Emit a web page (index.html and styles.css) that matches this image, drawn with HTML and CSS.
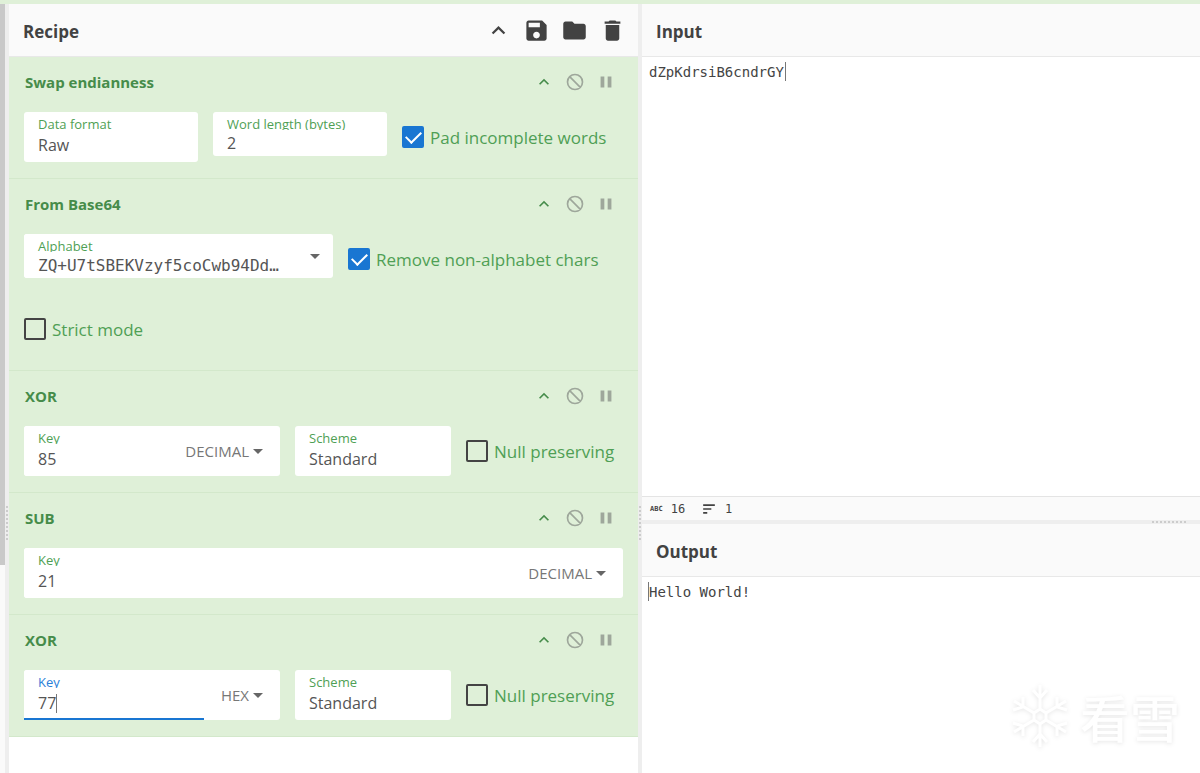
FILE: index.html
```html
<!DOCTYPE html>
<html lang="en">
<head>
    <meta charset="UTF-8">
    <meta name="viewport" content="width=device-width, initial-scale=1.0">
    <title>Recipe</title>
    <link rel="stylesheet" href="styles.css">
</head>
<body>

    <!-- Shared icons -->
    <svg class="sprite" aria-hidden="true">
        <symbol id="chevron" viewBox="0 0 24 24"><path d="M12 8l-6 6 1.41 1.41L12 10.83l4.59 4.58L18 14z"/></symbol>
        <symbol id="save" viewBox="0 0 24 24"><path d="M17 3H5c-1.11 0-2 .9-2 2v14c0 1.1.89 2 2 2h14c1.1 0 2-.9 2-2V7l-4-4zm-5 16c-1.66 0-3-1.34-3-3s1.34-3 3-3 3 1.34 3 3-1.34 3-3 3zm3-10H5V5h10v4z"/></symbol>
        <symbol id="folder" viewBox="0 0 24 24"><path d="M10 4H4c-1.1 0-1.99.9-1.99 2L2 18c0 1.1.9 2 2 2h16c1.1 0 2-.9 2-2V8c0-1.1-.9-2-2-2h-8l-2-2z"/></symbol>
        <symbol id="trash" viewBox="0 0 24 24"><path d="M6 19c0 1.1.9 2 2 2h8c1.1 0 2-.9 2-2V7H6v12zM19 4h-3.5l-1-1h-5l-1 1H5v2h14V4z"/></symbol>
        <symbol id="disable" viewBox="0 0 24 24"><path d="M12 3a9 9 0 1 0 0 18a9 9 0 0 0 0-18zM5.6 5.6l12.8 12.8" fill="none" stroke="currentColor" stroke-width="2"/></symbol>
        <symbol id="pause" viewBox="0 0 24 24"><path d="M5.500 5.500h4.500v13H5.500zM14 5.500h4.500v13H14z"/></symbol>
        <symbol id="lines" viewBox="0 0 24 24"><path d="M2 4h20v3H2zM2 10.500h14v3H2zM2 17h7v3H2z"/></symbol>
    </svg>

    <div class="banner"></div>

    <div class="workspace">
        <div class="scroll-track"><div class="scroll-thumb"></div></div>
        <div class="gutter gutter-horizontal"></div>

        <!-- Recipe -->
        <section class="recipe">
            <header class="title">
                <h2>Recipe</h2>
                <div class="controls">
                    <button aria-label="Hide arguments"><svg><use href="#chevron"/></svg></button>
                    <button aria-label="Save recipe"><svg><use href="#save"/></svg></button>
                    <button aria-label="Load recipe"><svg><use href="#folder"/></svg></button>
                    <button aria-label="Clear recipe"><svg><use href="#trash"/></svg></button>
                </div>
            </header>

            <ul class="rec-list">
                <li class="operation">
                    <div class="op-header">
                        <h3>Swap endianness</h3>
                        <div class="op-icons">
                            <button class="hide-args" aria-label="Hide arguments"><svg><use href="#chevron"/></svg></button>
                            <button aria-label="Disable operation"><svg><use href="#disable"/></svg></button>
                            <button aria-label="Set breakpoint"><svg><use href="#pause"/></svg></button>
                        </div>
                    </div>
                    <div class="args">
                        <div class="field medium">
                            <label for="data-format">Data format</label>
                            <select id="data-format"><option>Raw</option></select>
                        </div>
                        <div class="field medium short">
                            <label for="word-length">Word length (bytes)</label>
                            <input type="text" id="word-length" value="2">
                        </div>
                        <label class="check"><input type="checkbox" checked>Pad incomplete words</label>
                    </div>
                </li>

                <li class="operation">
                    <div class="op-header">
                        <h3>From Base64</h3>
                        <div class="op-icons">
                            <button class="hide-args" aria-label="Hide arguments"><svg><use href="#chevron"/></svg></button>
                            <button aria-label="Disable operation"><svg><use href="#disable"/></svg></button>
                            <button aria-label="Set breakpoint"><svg><use href="#pause"/></svg></button>
                        </div>
                    </div>
                    <div class="args">
                        <div class="group wide short">
                            <div class="field short">
                                <label for="alphabet">Alphabet</label>
                                <input type="text" id="alphabet" class="mono" value="ZQ+U7tSBEKVzyf5coCwb94Dd…">
                            </div>
                            <button class="toggle small" aria-label="Choose alphabet"><span class="arrow"></span></button>
                        </div>
                        <label class="check"><input type="checkbox" checked>Remove non-alphabet chars</label>
                        <label class="check"><input type="checkbox">Strict mode</label>
                    </div>
                </li>

                <li class="operation">
                    <div class="op-header">
                        <h3>XOR</h3>
                        <div class="op-icons">
                            <button class="hide-args" aria-label="Hide arguments"><svg><use href="#chevron"/></svg></button>
                            <button aria-label="Disable operation"><svg><use href="#disable"/></svg></button>
                            <button aria-label="Set breakpoint"><svg><use href="#pause"/></svg></button>
                        </div>
                    </div>
                    <div class="args">
                        <div class="group key">
                            <div class="field">
                                <label for="key-1">Key</label>
                                <input type="text" id="key-1" value="85">
                            </div>
                            <button class="toggle">DECIMAL<span class="arrow"></span></button>
                        </div>
                        <div class="field narrow">
                            <label for="scheme-1">Scheme</label>
                            <select id="scheme-1"><option>Standard</option></select>
                        </div>
                        <label class="check"><input type="checkbox">Null preserving</label>
                    </div>
                </li>

                <li class="operation">
                    <div class="op-header">
                        <h3>SUB</h3>
                        <div class="op-icons">
                            <button class="hide-args" aria-label="Hide arguments"><svg><use href="#chevron"/></svg></button>
                            <button aria-label="Disable operation"><svg><use href="#disable"/></svg></button>
                            <button aria-label="Set breakpoint"><svg><use href="#pause"/></svg></button>
                        </div>
                    </div>
                    <div class="args">
                        <div class="group full">
                            <div class="field">
                                <label for="key-2">Key</label>
                                <input type="text" id="key-2" value="21">
                            </div>
                            <button class="toggle">DECIMAL<span class="arrow"></span></button>
                        </div>
                    </div>
                </li>

                <li class="operation">
                    <div class="op-header">
                        <h3>XOR</h3>
                        <div class="op-icons">
                            <button class="hide-args" aria-label="Hide arguments"><svg><use href="#chevron"/></svg></button>
                            <button aria-label="Disable operation"><svg><use href="#disable"/></svg></button>
                            <button aria-label="Set breakpoint"><svg><use href="#pause"/></svg></button>
                        </div>
                    </div>
                    <div class="args">
                        <div class="group key">
                            <div class="field active">
                                <label for="key-3">Key</label>
                                <input type="text" id="key-3" value="77">
                                <span class="caret"></span>
                            </div>
                            <button class="toggle">HEX<span class="arrow"></span></button>
                        </div>
                        <div class="field narrow">
                            <label for="scheme-2">Scheme</label>
                            <select id="scheme-2"><option>Standard</option></select>
                        </div>
                        <label class="check"><input type="checkbox">Null preserving</label>
                    </div>
                </li>
            </ul>
        </section>

        <div class="gutter gutter-horizontal"></div>

        <!-- Input and output -->
        <div class="io">
            <section class="pane input-pane">
                <header class="title"><h2><label for="input-text">Input</label></h2></header>
                <div class="editor">
                    <textarea id="input-text" spellcheck="false">dZpKdrsiB6cndrGY</textarea>
                    <span class="caret caret-end"></span>
                </div>
                <footer class="status-bar">
                    <span class="abc">ABC</span>
                    <span>16</span>
                    <svg><use href="#lines"/></svg>
                    <span>1</span>
                </footer>
            </section>
            <div class="gutter gutter-vertical"></div>
            <section class="pane output-pane">
                <header class="title"><h2><label for="output-text">Output</label></h2></header>
                <div class="editor">
                    <textarea id="output-text" readonly spellcheck="false">Hello World!</textarea>
                    <span class="caret caret-start"></span>
                </div>
            </section>
        </div>
    </div>

    <div class="watermark">
        <svg viewBox="0 0 60 66">
            <path d="M30 26l6 4v7l-6 4-6-4v-7zM30 26V2M30 41v23M36 30l20-12M36 37l20 12M24 30L4 18M24 37L4 49M23 7l7 8 7-8M23 59l7-8 7 8M47 14v10l10 3M47 53V43l10-3M13 14v10L3 27M13 53V43L3 40"/>
        </svg>
        <span>看雪</span>
    </div>

</body>
</html>
```
FILE: styles.css
```css
* {
    box-sizing: border-box;
}

body {
    margin: 0;
    height: 100vh;
    display: flex;
    flex-direction: column;
    overflow: hidden;
    background-color: #fff;
    color: #424242;
    font-family: "Open Sans", "Noto Sans", sans-serif;
    font-size: 16px;
}

h2, h3, ul {
    margin: 0;
    padding: 0;
}

button {
    border: none;
    background: none;
    padding: 0;
    color: inherit;
    font-family: inherit;
    cursor: pointer;
}

svg {
    display: block;
    fill: currentColor;
}

.sprite {
    position: absolute;
    width: 0;
    height: 0;
}

.banner {
    flex: 0 0 4px;
    background-color: #dff0d8;
}

.workspace {
    flex: 1;
    display: flex;
    min-height: 0;
}

.scroll-track {
    flex: 0 0 5px;
    background-color: #fafafa;
}

.scroll-thumb {
    height: 73%;
    background-color: #c9c9c9;
}

.gutter {
    background-color: #eee;
}

.gutter-horizontal {
    flex: 0 0 4px;
}

.gutter-horizontal::before {
    content: "";
    display: block;
    width: 2px;
    height: 34px;
    margin: 65vh auto 0;
    background: repeating-linear-gradient(#ccc 0 2px, transparent 2px 4px);
}

.gutter-vertical {
    flex: 0 0 4px;
    display: flex;
    align-items: center;
    justify-content: flex-end;
    padding-right: 14px;
}

.gutter-vertical::before {
    content: "";
    width: 34px;
    height: 2px;
    background: repeating-linear-gradient(90deg, #ccc 0 2px, transparent 2px 4px);
}

.title {
    flex: 0 0 53px;
    display: flex;
    align-items: center;
    justify-content: space-between;
    padding: 4px 12px 0 14px;
    background-color: #fafafa;
    border-bottom: 1px solid #e8e8e8;
}

.title h2 {
    font-size: 17px;
    line-height: 24px;
}

.controls {
    display: flex;
    gap: 11px;
    padding-bottom: 4px;
}

.controls svg {
    width: 27px;
    height: 27px;
}

/* Recipe */
.recipe {
    flex: 629;
    display: flex;
    flex-direction: column;
    min-width: 0;
}

.rec-list {
    list-style: none;
}

.operation {
    padding: 0 15px 16px;
    background-color: #dff0d8;
    border-bottom: 1px solid #d3e8cb;
    color: #468c4a;
}

.op-header {
    height: 55px;
    display: flex;
    align-items: center;
    justify-content: space-between;
    padding: 0 7px 6px 1px;
}

.op-header h3 {
    font-size: 15px;
    line-height: 20px;
}

.op-icons {
    display: flex;
    gap: 11px;
    color: #9ea79b;
}

.op-icons svg {
    width: 20px;
    height: 20px;
}

.hide-args {
    color: #468c4a;
}

.args {
    display: flex;
    flex-wrap: wrap;
    align-items: flex-start;
    gap: 20px 15px;
}

.field {
    position: relative;
    height: 50px;
    padding-top: 4px;
    background-color: #fff;
    border-radius: 3px;
}

.short,
.short .field {
    height: 44px;
}

.field label {
    display: block;
    height: 14px;
    padding-left: 14px;
    overflow: hidden;
    color: #4f9f55;
    font-size: 13px;
    line-height: 17px;
}

.field input,
.field select {
    display: block;
    width: 100%;
    height: 30px;
    padding: 0 0 0 14px;
    border: none;
    outline: none;
    appearance: none;
    background: none;
    color: #555;
    font-family: inherit;
    font-size: 16px;
}

.field.short input {
    height: 26px;
}

.field .mono {
    font-family: "DejaVu Sans Mono", monospace;
}

.group {
    display: flex;
    background-color: #fff;
    border-radius: 3px;
}

.group .field {
    flex: 1;
    min-width: 0;
}

.narrow {
    width: 156px;
}

.medium {
    width: 174px;
}

.key {
    width: 256px;
}

.wide {
    width: 309px;
}

.full {
    width: 100%;
}

.toggle {
    display: flex;
    align-items: center;
    gap: 4px;
    padding: 0 17px;
    color: #777;
    font-size: 15px;
    font-weight: 500;
}

.toggle.small {
    padding: 0 13px;
}

.arrow {
    border: 5px solid transparent;
    border-top-color: #666;
    border-bottom: none;
}

.field.active {
    border-bottom: 2px solid #1976d2;
    border-radius: 3px 0 0 0;
}

.field.active label {
    color: #2a80d8;
}

.check {
    height: 50px;
    display: flex;
    align-items: center;
    gap: 6px;
    color: #4f9f55;
    font-size: 17px;
    white-space: nowrap;
}

.check input {
    width: 22px;
    height: 22px;
    margin: 0;
    appearance: none;
    border: 2px solid #444;
    border-radius: 2px;
}

.check input:checked {
    border-color: #1976d2;
    background-color: #1976d2;
}

.check input:checked::before {
    content: "";
    display: block;
    width: 7px;
    height: 13px;
    margin: 0 0 0 5px;
    border: solid #fff;
    border-width: 0 2px 2px 0;
    transform: rotate(45deg);
}

.caret {
    position: absolute;
    width: 1px;
    height: 19px;
    background-color: #777;
}

.field .caret {
    left: calc(14px + 2ch);
    bottom: 5px;
}

/* Input and output */
.io {
    flex: 558;
    display: flex;
    flex-direction: column;
    min-width: 0;
}

.pane {
    display: flex;
    flex-direction: column;
    min-height: 0;
}

.input-pane {
    flex: 516;
}

.output-pane {
    flex: 249;
}

.editor {
    position: relative;
    flex: 1;
    font-family: "DejaVu Sans Mono", monospace;
    font-size: 14px;
}

.editor textarea {
    display: block;
    width: 100%;
    height: 100%;
    padding: 5px 7px;
    border: none;
    outline: none;
    resize: none;
    color: #444;
    font: inherit;
    line-height: 20px;
}

.editor .caret {
    top: 5px;
}

.caret-end {
    left: calc(8px + 16ch);
}

.caret-start {
    left: 6px;
}

.status-bar {
    height: 24px;
    display: flex;
    align-items: center;
    gap: 8px;
    padding-left: 8px;
    background-color: #fafafa;
    border-top: 1px solid #e4e4e4;
    font-family: "DejaVu Sans Mono", monospace;
    font-size: 12px;
}

.status-bar svg {
    width: 16px;
    height: 14px;
    margin-left: 8px;
}

.abc {
    font-size: 7px;
    font-weight: bold;
}

/* Logo laid over the output pane */
.watermark {
    position: absolute;
    right: 20px;
    bottom: 22px;
    display: flex;
    align-items: center;
    gap: 10px;
    color: #fff;
    font-family: "Noto Sans CJK SC", sans-serif;
    font-size: 50px;
    font-weight: 500;
    line-height: 70px;
    filter: drop-shadow(0 1px 2px rgba(0, 0, 0, 0.1));
    pointer-events: none;
}

.watermark svg {
    width: 60px;
    height: 66px;
    fill: none;
    stroke: #fff;
    stroke-width: 3;
}
```
